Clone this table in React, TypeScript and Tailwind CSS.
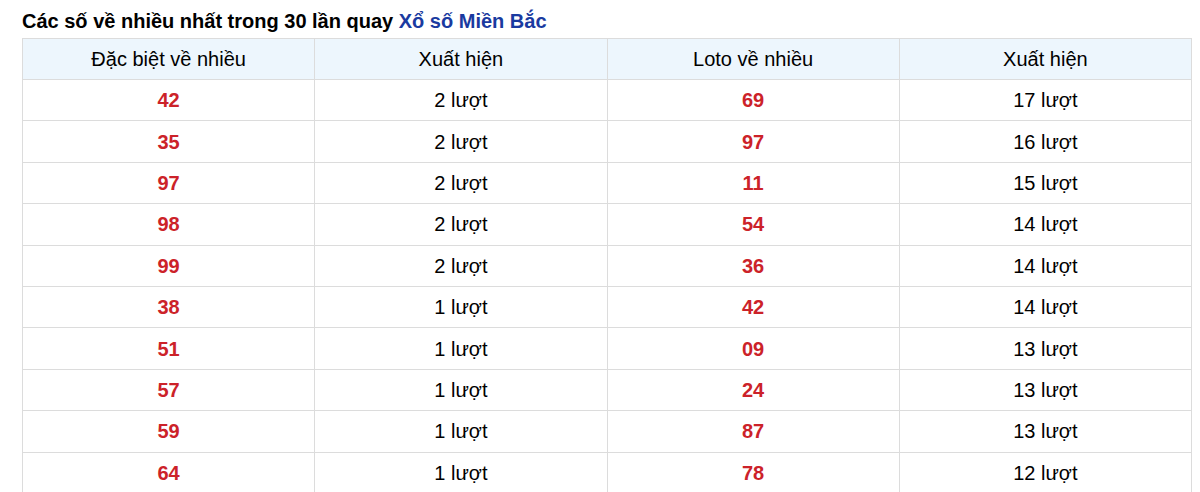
type Row = { special: string; specialCount: string; loto: string; lotoCount: string };

const rows: Row[] = [
  { special: "42", specialCount: "2 lượt", loto: "69", lotoCount: "17 lượt" },
  { special: "35", specialCount: "2 lượt", loto: "97", lotoCount: "16 lượt" },
  { special: "97", specialCount: "2 lượt", loto: "11", lotoCount: "15 lượt" },
  { special: "98", specialCount: "2 lượt", loto: "54", lotoCount: "14 lượt" },
  { special: "99", specialCount: "2 lượt", loto: "36", lotoCount: "14 lượt" },
  { special: "38", specialCount: "1 lượt", loto: "42", lotoCount: "14 lượt" },
  { special: "51", specialCount: "1 lượt", loto: "09", lotoCount: "13 lượt" },
  { special: "57", specialCount: "1 lượt", loto: "24", lotoCount: "13 lượt" },
  { special: "59", specialCount: "1 lượt", loto: "87", lotoCount: "13 lượt" },
  { special: "64", specialCount: "1 lượt", loto: "78", lotoCount: "12 lượt" },
];

export default function App() {
  return (
    <main className="min-h-screen bg-white font-['Liberation_Sans',Arial,sans-serif] text-black">
      <div className="pl-[22px] pr-[8px] pt-[9px]">
        <h2 className="text-[20px] font-bold leading-[25px] mb-[4px]">
          Các số về nhiều nhất trong 30 lần quay <span className="text-[#1a3aa0]">Xổ số Miền Bắc</span>
        </h2>
        <table className="w-full border-collapse table-fixed text-center text-[20px]">
          <thead className="bg-[#edf6fd]">
            <tr>
              <th className="h-[41px] border border-[#dcdcdc] font-normal">Đặc biệt về nhiều</th>
              <th className="h-[41px] border border-[#dcdcdc] font-normal">Xuất hiện</th>
              <th className="h-[41px] border border-[#dcdcdc] font-normal">Loto về nhiều</th>
              <th className="h-[41px] border border-[#dcdcdc] font-normal">Xuất hiện</th>
            </tr>
          </thead>
          <tbody>
            {rows.map((r) => (
              <tr key={r.special + r.loto}>
                <td className="h-[41.4px] border border-[#dcdcdc] font-bold text-[#cc2229]">{r.special}</td>
                <td className="h-[41.4px] border border-[#dcdcdc]">{r.specialCount}</td>
                <td className="h-[41.4px] border border-[#dcdcdc] font-bold text-[#cc2229]">{r.loto}</td>
                <td className="h-[41.4px] border border-[#dcdcdc]">{r.lotoCount}</td>
              </tr>
            ))}
          </tbody>
        </table>
      </div>
    </main>
  );
}
